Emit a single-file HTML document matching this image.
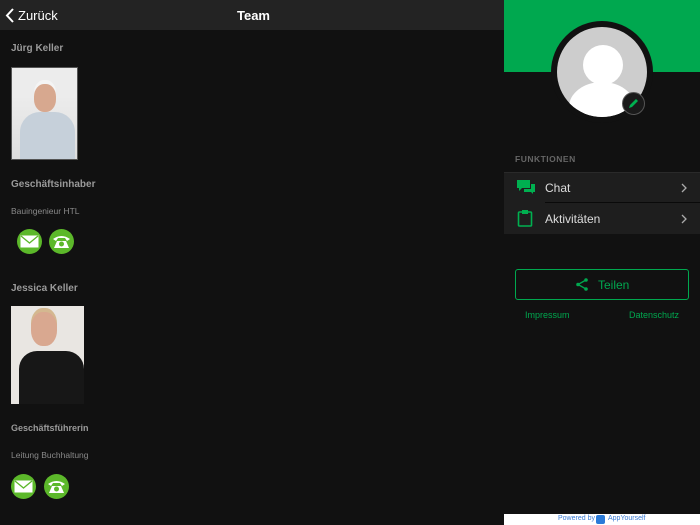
<!DOCTYPE html>
<html><head><meta charset="utf-8"><style>
*{margin:0;padding:0;box-sizing:border-box}
body{width:700px;height:525px;background:#111;font-family:"Liberation Sans",sans-serif;position:relative;overflow:hidden}
.a{position:absolute}
.hdr{left:0;top:0;width:504px;height:30px;background:#232323}
.t{color:#9a9a9a;font-weight:bold;font-size:10px}
.s{color:#8a8a8a;font-size:8.5px}
.ic{width:25px;height:25px;border-radius:50%;background:#5cb82a}
</style></head><body>
<div class="a hdr"></div>
<svg class="a" style="left:5px;top:8px" width="10" height="15"><path d="M8 1L2 7.5 8 14" stroke="#fff" stroke-width="2" fill="none"/></svg>
<div class="a" style="left:18px;top:8px;color:#fff;font-size:13px">Zurück</div>
<div class="a" style="left:237px;top:8px;color:#fff;font-size:13px;font-weight:bold">Team</div>

<div class="a t" style="left:11px;top:43px">Jürg Keller</div>
<div class="a" style="left:11px;top:67px;width:67px;height:93px;background:linear-gradient(#ececec 0 30%,#dedede);border:1px solid #555;overflow:hidden">
<div class="a" style="left:22px;top:16px;width:22px;height:28px;border-radius:45%;background:#d7a88f;box-shadow:0 -4px 0 #f4f4f4"></div>
<div class="a" style="left:8px;top:44px;width:55px;height:48px;border-radius:20px 20px 0 0;background:#c6d0da"></div></div>
<div class="a t" style="left:11px;top:179px">Geschäftsinhaber</div>
<div class="a s" style="left:11px;top:206px">Bauingenieur HTL</div>
<div class="a ic" style="left:17px;top:229px"></div><div class="a ic" style="left:49px;top:229px"></div>
<svg class="a" style="left:20px;top:235px" width="19" height="13"><rect x="0.5" y="0.5" width="18" height="12" fill="#fff"/><path d="M1 1l8.5 7 8.5-7" stroke="#5cb82a" fill="none" stroke-width="1.3"/></svg>
<svg class="a" style="left:52px;top:234px" width="19" height="15"><path d="M1 5Q9.5-1 18 5L15 7 13 4H6L4 7Z M5 7h9l3 7H2Z" fill="#fff"/><circle cx="9.5" cy="10" r="2.5" fill="#5cb82a"/></svg>

<div class="a t" style="left:11px;top:283px">Jessica Keller</div>
<div class="a" style="left:11px;top:306px;width:73px;height:98px;background:#e9e6e2;overflow:hidden">
<div class="a" style="left:20px;top:6px;width:26px;height:34px;border-radius:45%;background:#d9a890;box-shadow:0 -4px 0 #d4b890"></div>
<div class="a" style="left:8px;top:45px;width:65px;height:53px;border-radius:18px 18px 0 0;background:#171717"></div></div>
<div class="a t" style="left:11px;top:423px;font-size:9px">Geschäftsführerin</div>
<div class="a s" style="left:11px;top:450px">Leitung Buchhaltung</div>
<div class="a ic" style="left:11px;top:474px"></div><div class="a ic" style="left:44px;top:474px"></div>
<svg class="a" style="left:14px;top:480px" width="19" height="13"><rect x="0.5" y="0.5" width="18" height="12" fill="#fff"/><path d="M1 1l8.5 7 8.5-7" stroke="#5cb82a" fill="none" stroke-width="1.3"/></svg>
<svg class="a" style="left:47px;top:479px" width="19" height="15"><path d="M1 5Q9.5-1 18 5L15 7 13 4H6L4 7Z M5 7h9l3 7H2Z" fill="#fff"/><circle cx="9.5" cy="10" r="2.5" fill="#5cb82a"/></svg>

<div class="a" style="left:504px;top:0;width:196px;height:525px;background:#111"></div>
<div class="a" style="left:504px;top:0;width:196px;height:72px;background:#00a84f"></div>
<div class="a" style="left:551px;top:21px;width:102px;height:102px;border-radius:50%;background:#111"></div>
<div class="a" style="left:557px;top:27px;width:90px;height:90px;border-radius:50%;background:#cdcdcd;overflow:hidden">
<div class="a" style="left:26px;top:18px;width:40px;height:40px;border-radius:50%;background:#fff"></div>
<div class="a" style="left:12px;top:55px;width:66px;height:50px;border-radius:50%;background:#fff"></div></div>
<div class="a" style="left:622px;top:92px;width:23px;height:23px;border-radius:50%;background:#1a1a1a;border:1px solid #555"></div>
<svg class="a" style="left:627px;top:97px" width="13" height="13"><path d="M2 11l1-3 6-6 2 2-6 6z" fill="#00b050"/></svg>
<div class="a" style="left:515px;top:154px;color:#666;font-size:8.5px;font-weight:bold;letter-spacing:.5px">FUNKTIONEN</div>
<div class="a" style="left:504px;top:172px;width:196px;height:62px;background:#1e1e1e;border-top:1px solid #2a2a2a"></div>
<div class="a" style="left:545px;top:202px;width:155px;height:1px;background:#0a0a0a"></div>
<svg class="a" style="left:516px;top:179px" width="20" height="16"><path d="M1 1h13v8H6l-3 3V9H1z" fill="#00b050"/><path d="M15 5h4v8h-2v2l-2-2H8v-3h7z" fill="#00b050"/></svg>
<svg class="a" style="left:517px;top:209px" width="16" height="18"><rect x="1.5" y="3" width="13" height="14" rx="1" stroke="#00b050" stroke-width="1.6" fill="none"/><rect x="5" y="1" width="6" height="4" fill="#00b050"/></svg>
<div class="a" style="left:545px;top:181px;color:#ddd;font-size:12px">Chat</div>
<div class="a" style="left:545px;top:212px;color:#ddd;font-size:12px">Aktivitäten</div>
<svg class="a" style="left:681px;top:183px" width="6" height="10"><path d="M1 1l4 4-4 4" stroke="#aaa" stroke-width="1.3" fill="none"/></svg>
<svg class="a" style="left:681px;top:214px" width="6" height="10"><path d="M1 1l4 4-4 4" stroke="#aaa" stroke-width="1.3" fill="none"/></svg>
<div class="a" style="left:515px;top:269px;width:174px;height:31px;border:1.5px solid #00a84f;border-radius:3px"></div>
<svg class="a" style="left:576px;top:278px" width="12" height="13"><path d="M10 2L2 6.5 10 11" stroke="#00a84f" stroke-width="1.3" fill="none"/><circle cx="10" cy="2" r="1.8" fill="#00a84f"/><circle cx="2" cy="6.5" r="1.8" fill="#00a84f"/><circle cx="10" cy="11" r="1.8" fill="#00a84f"/></svg>
<div class="a" style="left:598px;top:278px;color:#00a84f;font-size:12px">Teilen</div>
<div class="a" style="left:525px;top:310px;color:#00a84f;font-size:9px">Impressum</div>
<div class="a" style="left:629px;top:310px;color:#00a84f;font-size:9px">Datenschutz</div>
<div class="a" style="left:504px;top:514px;width:196px;height:11px;background:#fff"></div>
<div class="a" style="left:558px;top:515px;color:#3a7bd5;font-size:7px">Powered by</div>
<div class="a" style="left:596px;top:515px;width:9px;height:9px;background:#2a7ad8;border-radius:2px"></div>
<div class="a" style="left:608px;top:515px;color:#3a7bd5;font-size:7px">AppYourself</div>
</body></html>
